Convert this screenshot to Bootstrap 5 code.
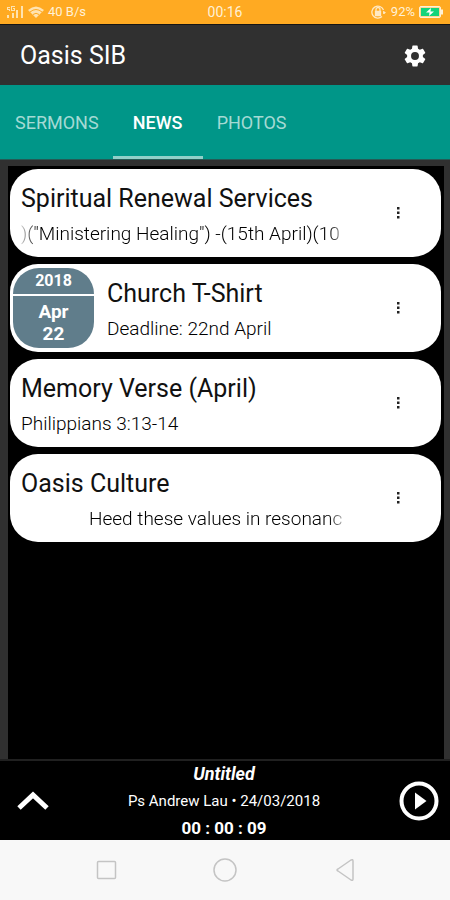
<!DOCTYPE html>
<html lang="en">
<head>
<meta charset="utf-8">
<meta name="viewport" content="width=device-width, initial-scale=1">
<title>Oasis SIB</title>
<link href="https://cdn.jsdelivr.net/npm/bootstrap@5.3.0/dist/css/bootstrap.min.css" rel="stylesheet">
<style>
body{font-family:Roboto,sans-serif;background:#000;color:#fff}
svg{display:block;flex:none}
button{background:none;border:0;padding:0;color:inherit}
.status{background:#ffaa22;color:#fff1d6;height:24px;font-size:13px;line-height:24px;padding:0 6px}
.status>div{flex:1 1 0}
.status>span{font-size:14px}
.appbar{background:#303030;height:61px;padding:2px 24px 0 20px;border-top:1px solid #151515}
.appbar h1{font-size:25px;line-height:32px}
.tabs{background:#009688;height:75px;padding-left:1px;border-bottom:1px solid #245a55}
.tabs .nav-link{min-width:90px;padding:4px 14px 0;font-size:18px;color:#a5dad4;border-radius:0;border-bottom:3px solid transparent;display:flex;align-items:center;justify-content:center}
.tabs .nav-link.active{color:#fff;font-weight:500;border-bottom-color:#90d0c9}
.content{background:#303030;padding:6px 6px 0 8px}
.feed{background:#000;padding:3px 3px 3px 2px;gap:7px}
.news{background:#fff;color:#111;border-radius:28px;height:88px;padding-right:36px}
.news-text{padding:14px 0 0 11px}
.news h2{font-size:25px;line-height:32px;font-weight:400;color:#111}
.news p{font-size:19px;line-height:24px;margin-top:7px;font-weight:300;color:#000}
.clip{max-width:324px;white-space:nowrap;-webkit-mask-image:linear-gradient(90deg,#000 95%,#0003);mask-image:linear-gradient(90deg,#000 95%,#0003)}
.clip.both{-webkit-mask-image:linear-gradient(90deg,#0003,#000 5%,#000 95%,#0003);mask-image:linear-gradient(90deg,#0003,#000 5%,#000 95%,#0003)}
.scrolled{padding-left:68px}
.datebox{width:81px;height:80px;margin-left:3px;border-radius:26px;overflow:hidden;color:#fff;font-weight:700;text-align:center;gap:2px}
.datebox span{background:#607d8b}
.year{font-size:16px;line-height:26px}
.day{font-size:19px;line-height:22px;padding-top:5px}
.news .datebox+.news-text{padding-left:13px}
.more{width:14px;height:24px}
.player{background:#000;border-top:2px solid #202020;height:81px;padding:0 11px 0 17px}
.track{font-size:18px;line-height:26px;font-weight:700}
.track .by{font-size:15px;font-weight:400;line-height:28px}
.track .time{font-size:17px}
.sysnav{background:#f8f8f8;height:60px;padding:0 90px}
</style>
<script src="https://cdn.jsdelivr.net/npm/bootstrap@5.3.0/dist/js/bootstrap.bundle.min.js"></script>
</head>
<body class="d-flex flex-column min-vh-100">
<div class="status d-flex align-items-center">
  <div class="d-flex align-items-center">
    <svg width="18" height="14" viewBox="0 0 18 14" fill="#ffe3b0"><path d="M1 10h2v3H1zM6 8h2v5H6zM10 5h2v8h-2zM15 1h2v12h-2zM1 2h3v1H2v1h2v2H3V5H1zM5 1h4v1H6v3h2V4H7V3h2v3H5z"/></svg>
    <svg class="ms-1" width="16" height="13" viewBox="0 0 16 13"><path d="M0 4Q8-3 16 4L8 12z" fill="#ffe3b0"/><path d="M2 6q6-5 12 0M5 8.500q3-2.500 6 0" fill="none" stroke="#ffaa22"/></svg>
    <span class="ms-1">40 B/s</span>
  </div>
  <span>00:16</span>
  <div class="d-flex align-items-center justify-content-end">
    <svg width="16" height="14" viewBox="0 0 16 14" fill="none" stroke="#ffe9c4" stroke-width="1.300"><path d="M11 11.500A6 6 0 1 1 12.500 5M12.800 6v3"/><path d="M5 6V4.500a2 2 0 0 1 4 0V6"/><path d="M4.500 6.500h5v4h-5z" fill="#ffe9c4"/><path d="M12 7h3l-1.500 2z" fill="#ffe9c4" stroke="none"/></svg>
    <span class="ms-1 me-1">92%</span>
    <svg width="25" height="12" viewBox="0 0 25 12"><rect x=".5" y=".5" width="21" height="11" rx="1.500" fill="#ffd894" stroke="#fff1d6"/><rect x="2" y="2" width="18" height="8" fill="#14d47a"/><path d="M23 3.500v5" stroke="#fff1d6" stroke-width="2"/><path d="M12 2 7 6.500h3.500L10 10l5-4.500h-3.500z" fill="#fff"/></svg>
  </div>
</div>
<header class="appbar d-flex align-items-center justify-content-between">
  <h1 class="m-0 fw-normal">Oasis SIB</h1>
  <button type="button" aria-label="Settings"><svg width="22" height="22" viewBox="2 2 20 20" fill="#fff"><path d="M19.140 12.940c.04-.3.060-.61.060-.94 0-.32-.02-.64-.07-.94l2.030-1.580c.18-.14.230-.41.120-.61l-1.920-3.320c-.12-.22-.37-.29-.59-.22l-2.390.96c-.5-.38-1.030-.7-1.620-.94l-.36-2.540c-.04-.24-.24-.41-.48-.41h-3.840c-.24 0-.43.17-.47.41l-.36 2.540c-.59.24-1.130.57-1.620.94l-2.390-.96c-.22-.08-.47 0-.59.22L2.740 8.870c-.12.21-.08.47.120.61l2.030 1.580c-.05.3-.09.63-.09.94s.02.64.070.94l-2.030 1.580c-.18.14-.23.41-.12.61l1.920 3.320c.12.22.37.29.59.22l2.390-.96c.5.38 1.030.7 1.620.94l.36 2.540c.05.24.24.41.48.41h3.840c.24 0 .44-.17.470-.41l.36-2.540c.59-.24 1.130-.56 1.620-.94l2.390.96c.22.08.47 0 .59-.22l1.920-3.320c.12-.22.070-.47-.12-.61l-2.010-1.580zM12 15.600a3.600 3.600 0 1 1 0-7.200 3.600 3.600 0 0 1 0 7.200z"/></svg></button>
</header>
<nav class="tabs nav flex-nowrap">
  <a class="nav-link" href="#">SERMONS</a>
  <a class="nav-link active" href="#" aria-current="page">NEWS</a>
  <a class="nav-link" href="#">PHOTOS</a>
</nav>
<main class="content d-flex flex-column flex-grow-1">
  <div class="feed d-flex flex-column flex-grow-1">
    <article class="news d-flex align-items-center">
      <div class="news-text flex-grow-1 align-self-start"><h2 class="mb-0">Spiritual Renewal Services</h2><p class="mb-0 clip both">)("Ministering Healing") -(15th April)(10</p></div>
      <button class="more" type="button" aria-label="More options"><svg width="14" height="14" viewBox="0 0 14 14"><path d="M6 1h2.500v2.500H6zM6 5.500h2.500V8H6zM6 10h2.500v2.500H6z" fill="#222"/></svg></button>
    </article>
    <article class="news d-flex align-items-center">
      <div class="datebox d-flex flex-column"><span class="year">2018</span><span class="day flex-grow-1">Apr<br>22</span></div>
      <div class="news-text flex-grow-1 align-self-start"><h2 class="mb-0">Church T-Shirt</h2><p class="mb-0">Deadline: 22nd April</p></div>
      <button class="more" type="button" aria-label="More options"><svg width="14" height="14" viewBox="0 0 14 14"><path d="M6 1h2.500v2.500H6zM6 5.500h2.500V8H6zM6 10h2.500v2.500H6z" fill="#222"/></svg></button>
    </article>
    <article class="news d-flex align-items-center">
      <div class="news-text flex-grow-1 align-self-start"><h2 class="mb-0">Memory Verse (April)</h2><p class="mb-0">Philippians 3:13-14</p></div>
      <button class="more" type="button" aria-label="More options"><svg width="14" height="14" viewBox="0 0 14 14"><path d="M6 1h2.500v2.500H6zM6 5.500h2.500V8H6zM6 10h2.500v2.500H6z" fill="#222"/></svg></button>
    </article>
    <article class="news d-flex align-items-center">
      <div class="news-text flex-grow-1 align-self-start"><h2 class="mb-0">Oasis Culture</h2><p class="mb-0 clip scrolled">Heed these values in resonanc</p></div>
      <button class="more" type="button" aria-label="More options"><svg width="14" height="14" viewBox="0 0 14 14"><path d="M6 1h2.500v2.500H6zM6 5.500h2.500V8H6zM6 10h2.500v2.500H6z" fill="#222"/></svg></button>
    </article>
  </div>
</main>
<section class="player d-flex align-items-center justify-content-between">
  <button type="button" aria-label="Expand player"><svg width="32" height="20" viewBox="0 0 32 20"><path d="M2 17 16 4l14 13" fill="none" stroke="#fff" stroke-width="5"/></svg></button>
  <div class="track text-center"><div class="fst-italic">Untitled</div><div class="by">Ps Andrew Lau • 24/03/2018</div><div class="time">00 : 00 : 09</div></div>
  <button type="button" aria-label="Play"><svg width="40" height="40" viewBox="0 0 40 40"><circle cx="20" cy="20" r="17.500" fill="none" stroke="#fff" stroke-width="4"/><path d="M16 11.500v17l11.500-8.500z" fill="#fff"/></svg></button>
</section>
<footer class="sysnav d-flex align-items-center justify-content-between">
  <button type="button" aria-label="Recent apps"><svg width="32" height="24" viewBox="0 0 32 24" fill="none" stroke="#c4c4c4" stroke-width="1.500"><rect x="7.500" y="3.500" width="18" height="17" rx="1"/></svg></button>
  <button type="button" aria-label="Home"><svg width="24" height="24" viewBox="0 0 24 24" fill="none" stroke="#c4c4c4" stroke-width="1.500"><circle cx="12" cy="12" r="11"/></svg></button>
  <button type="button" aria-label="Back"><svg width="32" height="24" viewBox="0 0 32 24" fill="none" stroke="#c4c4c4" stroke-width="1.500" stroke-linejoin="round"><path d="M10 11 23 2q2-1 2 1v18q0 2-2 1L10 13q-2-1 0-2z"/></svg></button>
</footer>
</body>
</html>
